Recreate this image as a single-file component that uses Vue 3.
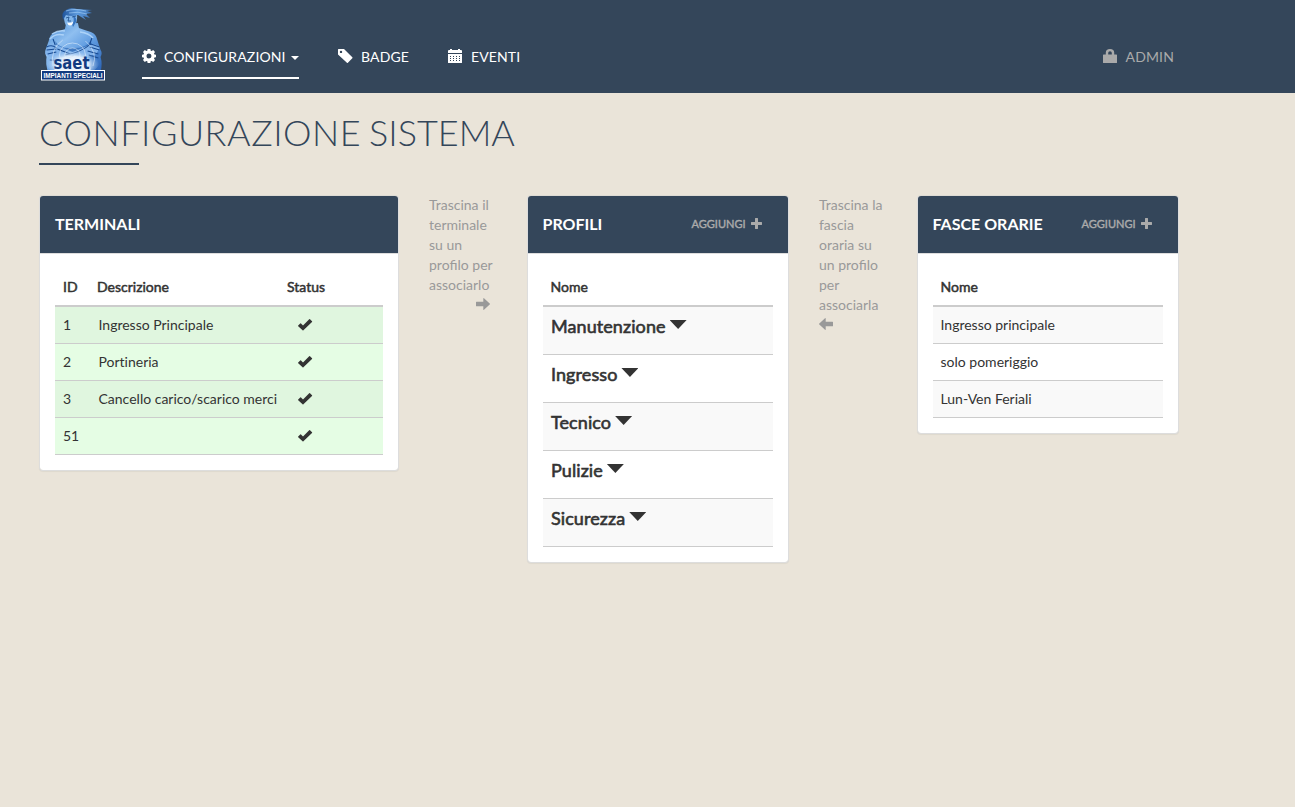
<script setup>
const icons = {
  cog: 'M5.600 0h2.800l.3 1.700 1 .4 1.500-1L13 2.900l-1 1.500.4 1 1.600.3v2.600l-1.600.3-.4 1 1 1.500-1.800 1.800-1.500-1-1 .4-.3 1.700H5.600l-.3-1.700-1-.4-1.500 1L1 11.100l1-1.500-.4-1L0 8.300V5.700l1.600-.3.4-1-1-1.500 1.800-1.800 1.500 1 1-.4zM7 4.500a2.500 2.500 0 1 0 0 5 2.500 2.500 0 0 0 0-5z',
  tag: 'M0 .6Q0 0 .6 0H6l8.300 8.300q.5.500 0 1l-4.400 4.400q-.5.500-1 0L0 5.400zM3 1.700a1.200 1.200 0 1 0 0 2.400 1.200 1.200 0 0 0 0-2.400z',
  calendar: 'M0 2q0-1 1-1h1V0h2v1h6V0h2v1h1q1 0 1 1v2H0zM0 5h14v8.500q0 .5-.5.500H.5q-.5 0-.5-.5zM2 7v1h1V7zm3 0v1h1V7zm3 0v1h1V7zm3 0v1h1V7zM2 9v1h1V9zm3 0v1h1V9zm3 0v1h1V9zm3 0v1h1V9zM2 11v1h1v-1zm3 0v1h1v-1zm3 0v1h1v-1zm3 0v1h1v-1z',
  lock: 'M.6 5.500H2.800V3.600Q2.800 0 7 0t4.200 3.600v1.900h2.200q.6 0 .6.600v7.300q0 .6-.6.600H.6q-.6 0-.6-.6V6.100q0-.6.6-.6zM5.200 5.500h3.600V4q0-1.800-1.800-1.800T5.200 4z',
  check: 'M.2 7.400l2-2q.4-.4.8 0l2 2 6.200-6.200q.4-.4.800 0l2 2q.4.400 0 .8l-8.600 8.300q-.4.400-.8 0L.2 8.200q-.4-.4 0-.8z',
  right: 'M0 5.200q0-.5.500-.5h6.800V1.500q0-.8.700-.3l5.700 5.300q.5.500 0 1L8 12.800q-.7.500-.7-.3V9.200H.5q-.5 0-.5-.5z',
  left: 'M14 5.200q0-.5-.5-.5H6.700V1.500q0-.8-.7-.3L.3 6.500q-.5.500 0 1L6 12.800q.7.500.7-.3V9.200h6.800q.5 0 .5-.5z',
  plus: 'M4 .4Q4 0 4.400 0h2.200q.4 0 .4.400V4h3.600q.4 0 .4.400v2.200q0 .4-.4.400H7v3.600q0 .4-.4.400H4.400q-.4 0-.4-.4V7H.4Q0 7 0 6.600V4.400Q0 4 .4 4H4z',
}
const terminals = [
  { id: 1, name: 'Ingresso Principale' },
  { id: 2, name: 'Portineria' },
  { id: 3, name: 'Cancello carico/scarico merci' },
  { id: 51, name: '' },
]
const profiles = ['Manutenzione', 'Ingresso', 'Tecnico', 'Pulizie', 'Sicurezza']
const slots = ['Ingresso principale', 'solo pomeriggio', 'Lun-Ven Feriali']
</script>

<template>
  <div class="page">
    <header class="navbar">
      <a class="brand">
        <svg width="66" height="76" viewBox="0 0 66 76">
          <defs>
            <linearGradient id="skin" x1="0" y1="0" x2="1" y2="1">
              <stop offset="0" stop-color="#3f83cf" />
              <stop offset=".35" stop-color="#8fbff0" />
              <stop offset=".6" stop-color="#5f9be0" />
              <stop offset="1" stop-color="#2a62b4" />
            </linearGradient>
            <linearGradient id="hair" x1="0" y1="0" x2="1" y2="0">
              <stop offset="0" stop-color="#1f549c" />
              <stop offset=".5" stop-color="#5c9ade" />
              <stop offset="1" stop-color="#3d72b4" />
            </linearGradient>
            <radialGradient id="glow" cx=".5" cy=".6" r=".5">
              <stop offset="0" stop-color="#fff" />
              <stop offset=".6" stop-color="#eaf4fe" stop-opacity=".92" />
              <stop offset="1" stop-color="#a5cdf5" stop-opacity="0" />
            </radialGradient>
          </defs>
          <g transform="translate(-1 0) scale(1.08 1)">
            <path d="M25 19l-1 5q-5 2-9 3-5 2-6 9L6 45q-1 3 1 7-1 6 1 14h49q2-7 0-14 2-4 0-7l-3-10q-1-6-6-8-6-2-11-4l-1-5z" fill="url(#skin)" />
            <path d="M10 34q5-6 13-4M12 29q6-4 12-3M38 27q8 1 12 6" fill="none" stroke="#b9dbfb" stroke-width="1.500" opacity=".8" />
            <path d="M15 36q4 8 15 7 13 1 18-7l1 5-18 7-15-5z" fill="#2e68b4" opacity=".7" />
            <path d="M8 41q5-4 10 0l13 6 16-7q7-2 9 3l-3 6-20 7-18-1-9-6z" fill="#82b3eb" />
            <path d="M13 34l2 6M49 33l-2 6M7 42q5-3 9 1M7 45l9-1M8 49l8-2M17 44l12 5M24 50q14-2 24-11l8 3M47 42l9 3M45 46l10 3M10 55q12 1 22-4M55 53l-9-3" fill="none" stroke="#174a92" stroke-width="1" />
            <ellipse cx="31" cy="57" rx="25" ry="14" fill="url(#glow)" />
            <g fill="none" stroke="#eaf5ff" stroke-width=".8" opacity=".65">
              <circle cx="31" cy="50" r="7" /><circle cx="31" cy="50" r="12" /><path d="M13 61Q10 44 22 35M50 61q5-14-7-25" />
            </g>
          </g>
          <g transform="translate(0 1)">
            <path d="M24 11q0-6 7-6 7 0 6 8-1 7-4 9-3 2-6-1-3-4-3-10z" fill="#82b6eb" />
            <path d="M33 10q4 1 3 6l-3 5-1-3q3-3 1-8z" fill="#3674c0" />
            <path d="M23 14q-2-8 3-10 4-3 11-1l15 1-5 1 5 2-6 1 4 4-7-2 3 4-8-5q-7 2-12 0z" fill="url(#hair)" />
            <path d="M26 5q8-3 20 0M29 7q9-2 18 1" stroke="#9cc9f5" stroke-width=".7" fill="none" />
            <path d="M26 12l3-1m3 0l4-1M29 11l-1 4h3" stroke="#174785" stroke-width=".8" fill="none" />
            <path d="M27 16.500q4 1 6-1 0 4-3 4-2 0-3-3z" fill="#fff" />
          </g>
          <path d="M14.500 66v-3.500h36V66" fill="#e6f2fd" />
          <text x="31.500" y="64" text-anchor="middle" class="logo-name" textLength="36" lengthAdjust="spacingAndGlyphs">saet</text>
          <rect x="1.500" y="65.500" width="63" height="9.500" fill="#123b80" stroke="#fff" />
          <text x="33" y="72.900" text-anchor="middle" class="logo-sub" textLength="59" lengthAdjust="spacingAndGlyphs">IMPIANTI SPECIALI</text>
        </svg>
      </a>
      <nav class="menu">
        <a class="item active"><svg class="ico" viewBox="0 0 14 14"><path fill-rule="evenodd" :d="icons.cog" /></svg><span>CONFIGURAZIONI</span><i class="caret"></i></a>
        <a class="item"><svg class="ico tag" viewBox="0 0 15 14"><path fill-rule="evenodd" :d="icons.tag" /></svg><span>BADGE</span></a>
        <a class="item"><svg class="ico spaced" viewBox="0 0 14 14"><path fill-rule="evenodd" :d="icons.calendar" /></svg><span>EVENTI</span></a>
      </nav>
      <a class="item admin"><svg class="ico spaced" viewBox="0 0 14 14"><path fill-rule="evenodd" :d="icons.lock" /></svg><span>ADMIN</span></a>
    </header>

    <main>
      <h1><span>CONFIGURAZIONE</span> SISTEMA</h1>
      <div class="columns">
        <section class="panel wide">
          <div class="head"><h2>TERMINALI</h2></div>
          <div class="body">
            <table class="terminals">
              <thead><tr><th class="id">ID</th><th class="desc">Descrizione</th><th>Status</th></tr></thead>
              <tbody>
                <tr v-for="t in terminals" :key="t.id">
                  <td>{{ t.id }}</td>
                  <td class="name">{{ t.name }}</td>
                  <td class="status"><svg class="check" viewBox="0 0 15 14"><path :d="icons.check" /></svg></td>
                </tr>
              </tbody>
            </table>
          </div>
        </section>

        <div class="hint">
          Trascina il terminale su un profilo per associarlo
          <svg class="arrow to-right" viewBox="0 0 14 14"><path :d="icons.right" /></svg>
        </div>

        <section class="panel narrow">
          <div class="head"><h2>PROFILI</h2><a class="add">AGGIUNGI<svg viewBox="0 0 11 11"><path :d="icons.plus" /></svg></a></div>
          <div class="body">
            <table>
              <thead><tr><th>Nome</th></tr></thead>
              <tbody>
                <tr v-for="p in profiles" :key="p"><td class="profile"><div><b>{{ p }}</b><i class="toggle"></i></div></td></tr>
              </tbody>
            </table>
          </div>
        </section>

        <div class="hint">
          Trascina la fascia oraria su un profilo per associarla
          <svg class="arrow" viewBox="0 0 14 14"><path :d="icons.left" /></svg>
        </div>

        <section class="panel narrow">
          <div class="head"><h2>FASCE ORARIE</h2><a class="add">AGGIUNGI<svg viewBox="0 0 11 11"><path :d="icons.plus" /></svg></a></div>
          <div class="body">
            <table>
              <thead><tr><th>Nome</th></tr></thead>
              <tbody><tr v-for="s in slots" :key="s"><td>{{ s }}</td></tr></tbody>
            </table>
          </div>
        </section>
      </div>
    </main>
  </div>
</template>

<style>
body { background: #eae4d9; }
</style>

<style scoped>
* { box-sizing: border-box; }
.page { min-height: 807px; font: 14px/20px Lato, sans-serif; color: #333; background: #eae4d9; }
svg { display: block; fill: currentColor; }
.navbar { display: flex; height: 93px; padding-left: 40px; background: #34465a; }
.brand { width: 102px; padding-top: 5px; }
.brand svg { overflow: visible; }
.logo-name { font: bold 17px "DejaVu Sans", sans-serif; fill: #123b80; }
.logo-sub { font: bold 7px "Liberation Sans", sans-serif; fill: #fff; }
.menu { display: flex; gap: 39px; }
.item { display: flex; height: 32px; margin-top: 47px; color: #fff; font-size: 14px; letter-spacing: .13px; }
.item.active { width: 157px; border-bottom: 2px solid #fff; }
.ico { width: 14px; height: 14px; margin: 2px 8px 0 0; }
.ico.tag { width: 15px; }
.ico.spaced { margin-right: 9px; }
.caret { margin: 9px 0 0 auto; height: 0; border: 4px solid transparent; border-top-color: #fff; border-bottom: 0; }
.admin { margin-left: auto; margin-right: 121px; color: #aaa; }
main { padding-left: 39px; }
h1 { position: relative; height: 72px; margin: 0 0 30px; padding-top: 18px; font-size: 36px; line-height: 42px; font-weight: 300; word-spacing: -2px; color: #34465a; }
h1 span { letter-spacing: .53px; }
h1::after { content: ""; position: absolute; left: 0; bottom: 0; width: 100px; height: 2px; background: #34465a; }
.columns { display: flex; align-items: flex-start; gap: 30px; }
.panel { width: 262px; background: #fff; background-clip: padding-box; border: 1px solid #ddd; border-top-color: #dedbd4; border-radius: 4px; box-shadow: 0 1px 1px rgba(0, 0, 0, .05); overflow: hidden; }
.panel.wide { width: 360px; }
.head { display: flex; justify-content: space-between; align-items: center; height: 58px; padding: 0 27px 2px 15px; background: #34465a; border-bottom: 1px solid #ddd; }
.narrow .head { padding-left: 14.500px; }
h2 { margin: 0; font-size: 16px; line-height: 20px; font-weight: 700; color: #fff; }
.add { display: flex; align-items: center; gap: 5px; margin-right: -.5px; font-size: 11px; font-weight: 400; -webkit-text-stroke: .4px currentColor; color: #aaa; }
.add svg { width: 11px; height: 11px; }
.body { padding: 15px; }
table { width: 100%; border-spacing: 0; font-variant-ligatures: none; }
th, td { padding: 8px; text-align: left; font-weight: 400; border-bottom: 1px solid #ccc; }
.narrow th, .narrow td { padding-left: 7.500px; }
th { -webkit-text-stroke: .5px currentColor; border-bottom-width: 2px; }
td { height: 37px; }
tbody tr:nth-child(odd) { background: #f9f9f9; }
.terminals { table-layout: fixed; }
.terminals tbody tr { background: #e5fde4; }
.terminals tbody tr:nth-child(odd) { background: #e0f6df; }
.id { width: 34px; }
.desc { width: 190px; }
td.name { padding-left: 9.500px; padding-right: 0; white-space: nowrap; }
td.status { padding-left: 19px; }
.check { width: 15px; height: 14px; }
td.profile { height: 48px; padding: 8px 8px 15px; }
td.profile div { display: flex; height: 24px; }
td.profile b { font-size: 18px; line-height: 22px; font-weight: 400; letter-spacing: .08px; -webkit-text-stroke: .6px currentColor; }
.toggle { width: 17px; height: 9px; margin: 5px 0 0 4px; background: #333; clip-path: polygon(0 0, 100% 0, 50% 100%); }
.hint { width: 68px; color: #999; }
.arrow { width: 14px; height: 14px; margin-top: 2px; }
.to-right { margin-left: 47px; }
</style>
